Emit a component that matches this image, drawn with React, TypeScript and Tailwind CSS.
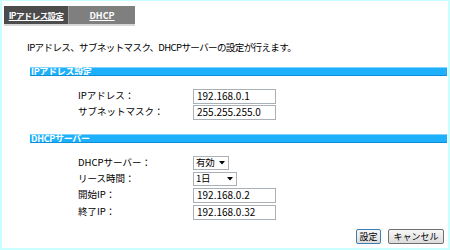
import React from "react";

const F = { fontFamily: '"Noto Sans CJK JP", "Noto Sans", sans-serif' };

function Bar({ label }: { label: string }) {
  return (
    <div className="ml-[28px] mr-[1px] h-[9px] flex flex-col">
      <div className="h-[1px] bg-[#7fd4ff]" />
      <div className="h-[7px] bg-[#1eb0fb] flex items-center">
        <span className="text-white font-bold text-[9px] leading-none pl-[1px] tracking-[-0.3px] whitespace-nowrap">{label}</span>
      </div>
      <div className="h-[1px] bg-[#0a8fd8]" />
    </div>
  );
}

function TextBox({ value }: { value: string }) {
  return (
    <div className="w-[83px] h-[15px] border border-[#a9b0b6] bg-white flex items-center pl-[3px] text-[10px] leading-none text-black whitespace-nowrap">
      {value}
    </div>
  );
}

function SelectBox({ value, w }: { value: string; w: string }) {
  return (
    <div className={`${w} h-[14px] border border-[#a9b0b6] bg-white flex items-center justify-between pl-[2px] pr-[3px] text-[9.5px] leading-none text-black whitespace-nowrap`}>
      <span className="tracking-[-0.3px]">{value}</span>
      <svg width="6" height="4" viewBox="0 0 6 4" className="shrink-0"><path d="M0 0 L6 0 L3 3.5 Z" fill="#000" /></svg>
    </div>
  );
}

function Row({ label, children, h }: { label: string; children: React.ReactNode; h: string }) {
  return (
    <div className={`flex items-center ${h}`}>
      <div className="w-[115px] text-[9.5px] leading-none text-black whitespace-nowrap">{label}</div>
      {children}
    </div>
  );
}

export default function App() {
  return (
    <div style={F} className="w-[450px] h-[250px] bg-white border-t border-l-2 border-r-2 border-b-2 border-[#c9ffff] flex flex-col overflow-hidden">
      {/* tabs */}
      <div className="mt-[5px] ml-[2px] flex flex-col w-[131px]">
        <div className="flex h-[18px]">
          <div className="w-[64px] bg-[#4c4c4c] flex items-center justify-center">
            <span className="text-white font-bold text-[8.5px] leading-none underline tracking-[-0.6px] whitespace-nowrap">IPアドレス設定</span>
          </div>
          <div className="w-[1px] bg-[#9a9a9a]" />
          <div className="flex-1 bg-[#7f7f7f] flex items-center justify-center">
            <span className="text-white font-bold text-[9px] leading-none underline">DHCP</span>
          </div>
        </div>
        <div className="h-[2px] bg-[#d8d8d8]" />
      </div>

      <div className="mt-[17px] ml-[25px] text-[9.5px] leading-none text-black tracking-[-0.6px] whitespace-nowrap">
        IPアドレス、サブネットマスク、DHCPサーバーの設定が行えます。
      </div>

      <div className="mt-[14px]">
        <Bar label="IPアドレス設定" />
      </div>

      <div className="mt-[13px] ml-[76px] flex flex-col gap-[1px]">
        <Row label="IPアドレス：" h="h-[15px]"><TextBox value="192.168.0.1" /></Row>
        <Row label="サブネットマスク：" h="h-[15px]"><TextBox value="255.255.255.0" /></Row>
      </div>

      <div className="mt-[14px]">
        <Bar label="DHCPサーバー" />
      </div>

      <div className="mt-[13px] ml-[76px] flex flex-col gap-[2px]">
        <Row label="DHCPサーバー：" h="h-[14px]"><SelectBox value="有効" w="w-[36px]" /></Row>
        <Row label="リース時間：" h="h-[14px]"><SelectBox value="1日" w="w-[44px]" /></Row>
        <Row label="開始IP：" h="h-[15px]"><TextBox value="192.168.0.2" /></Row>
        <Row label="終了IP：" h="h-[15px]"><TextBox value="192.168.0.32" /></Row>
      </div>

      <div className="mt-[9px] mr-[4px] flex justify-end gap-[7px]">
        <button className="w-[25px] h-[15px] border border-[#3c7fb1] rounded-[2px] bg-gradient-to-b from-[#f7f7f7] to-[#dcdcdc] text-[9px] leading-none text-black flex items-center justify-center whitespace-nowrap">設定</button>
        <button className="w-[56px] h-[15px] border border-[#707070] rounded-[2px] bg-gradient-to-b from-[#f7f7f7] to-[#dcdcdc] text-[9px] leading-none text-black flex items-center justify-center whitespace-nowrap">キャンセル</button>
      </div>
    </div>
  );
}
